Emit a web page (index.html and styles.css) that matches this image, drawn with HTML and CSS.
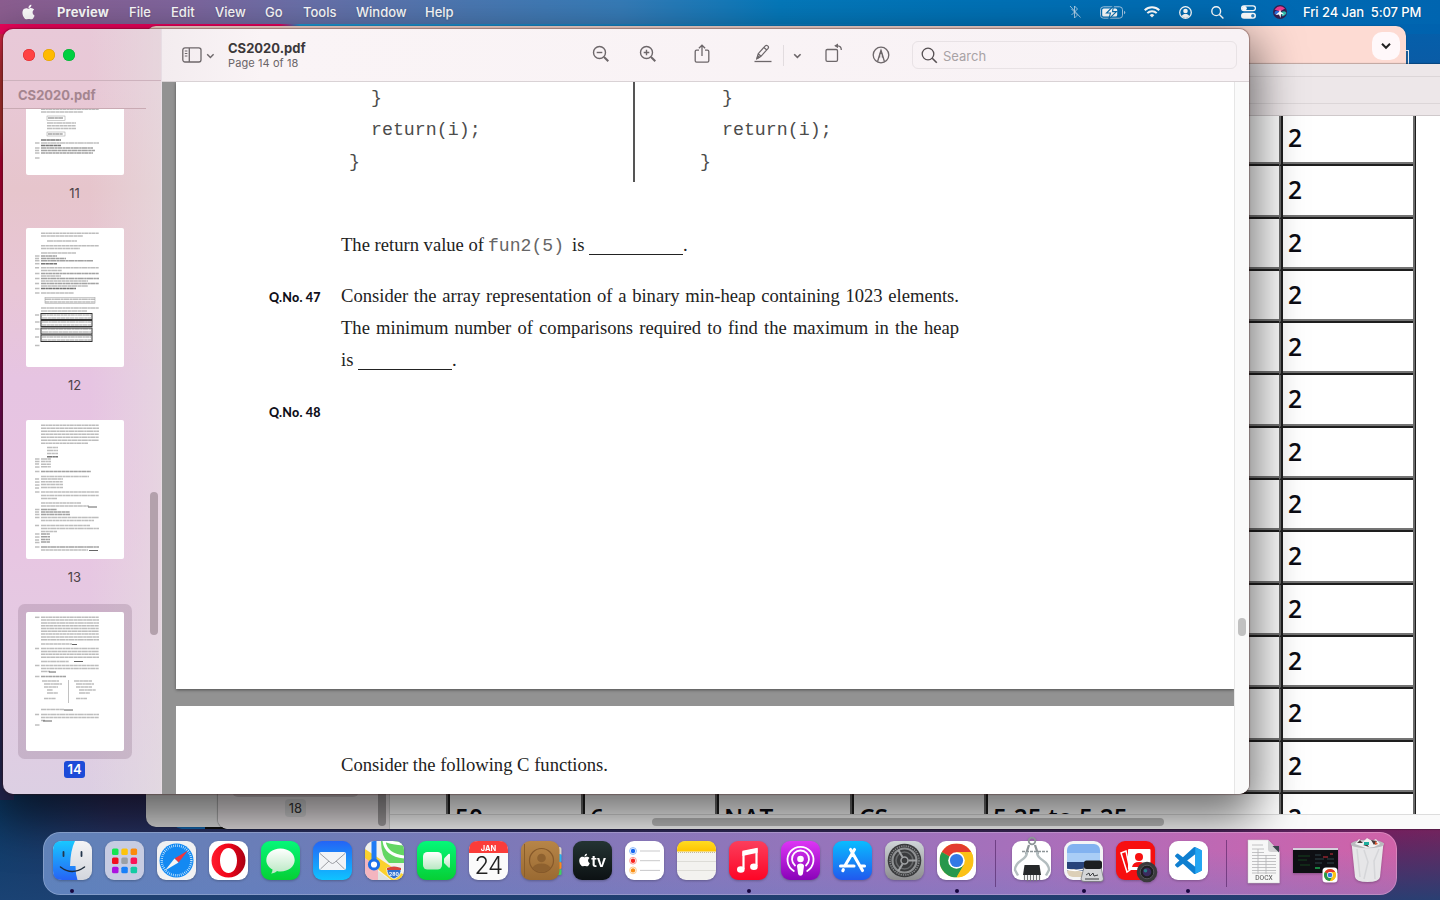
FILE: index.html
```html
<!DOCTYPE html>
<html lang="en">
<head>
<meta charset="utf-8">
<title>CS2020.pdf</title>
<link rel="stylesheet" href="styles.css">
</head>
<body>
<svg class="defs" width="0" height="0">
  <defs>
    <linearGradient id="gBlue" x1="0" y1="0" x2="0" y2="1"><stop offset="0" stop-color="#18c8ff"/><stop offset="1" stop-color="#2663f6"/></linearGradient>
    <linearGradient id="gGrey" x1="0" y1="0" x2="0" y2="1"><stop offset="0" stop-color="#f4f4f6"/><stop offset="1" stop-color="#d3d6dd"/></linearGradient>
    <linearGradient id="gGreen" x1="0" y1="0" x2="0" y2="1"><stop offset="0" stop-color="#05f779"/><stop offset="1" stop-color="#06cf35"/></linearGradient>
    <linearGradient id="gWhite" x1="0" y1="0" x2="0" y2="1"><stop offset="0" stop-color="#fff"/><stop offset="1" stop-color="#b9e8c3"/></linearGradient>
    <linearGradient id="gMail" x1="0" y1="0" x2="0" y2="1"><stop offset="0" stop-color="#2464f5"/><stop offset="1" stop-color="#0fc3ff"/></linearGradient>
    <linearGradient id="gOpera" x1="0" y1="0" x2="1" y2="0"><stop offset="0" stop-color="#ff1b2d"/><stop offset=".5" stop-color="#f00418"/><stop offset="1" stop-color="#a70014"/></linearGradient>
    <linearGradient id="gMusic" x1="0" y1="0" x2="0" y2="1"><stop offset="0" stop-color="#fb3e5c"/><stop offset="1" stop-color="#fd0526"/></linearGradient>
    <linearGradient id="gPod" x1="0" y1="0" x2="0" y2="1"><stop offset="0" stop-color="#dd35f5"/><stop offset="1" stop-color="#8903b8"/></linearGradient>
    <linearGradient id="gStore" x1="0" y1="0" x2="0" y2="1"><stop offset="0" stop-color="#09bcff"/><stop offset="1" stop-color="#2159ee"/></linearGradient>
    <linearGradient id="gGear" x1="0" y1="0" x2="0" y2="1"><stop offset="0" stop-color="#cfd5d8"/><stop offset="1" stop-color="#8d8d8f"/></linearGradient>
    <linearGradient id="gYellow" x1="0" y1="0" x2="0" y2="1"><stop offset="0" stop-color="#ffdb22"/><stop offset="1" stop-color="#ffc400"/></linearGradient>
    <linearGradient id="gBook" x1="0" y1="0" x2="0" y2="1"><stop offset="0" stop-color="#b78548"/><stop offset="1" stop-color="#9a6a32"/></linearGradient>
    <linearGradient id="gTv" x1="0" y1="0" x2="0" y2="1"><stop offset="0" stop-color="#243433"/><stop offset="1" stop-color="#0c1113"/></linearGradient>
    <symbol id="apple" viewBox="0 0 24 24"><path d="M12.152 6.896c-.948 0-2.415-1.078-3.96-1.04-2.04.027-3.91 1.183-4.961 3.014-2.117 3.675-.546 9.103 1.519 12.09 1.013 1.454 2.208 3.09 3.792 3.039 1.52-.065 2.09-.987 3.935-.987 1.831 0 2.35.987 3.96.948 1.637-.026 2.676-1.48 3.676-2.948 1.156-1.688 1.636-3.325 1.662-3.415-.039-.013-3.182-1.221-3.22-4.857-.026-3.04 2.48-4.494 2.597-4.559-1.429-2.09-3.623-2.324-4.39-2.376-2-.156-3.675 1.09-4.61 1.09zM15.53 3.83c.843-1.012 1.4-2.427 1.245-3.83-1.207.052-2.662.805-3.532 1.818-.78.896-1.454 2.338-1.273 3.714 1.338.104 2.715-.688 3.559-1.701"/></symbol>
    <symbol id="chrome" viewBox="0 0 34 34">
      <circle cx="17" cy="17" r="17" fill="#fbc116"/>
      <path d="M17 17L2.3 8.5A17 17 0 0 1 31.7 8.5H17z" fill="#e33b2e"/>
      <path d="M17 17L2.3 8.5A17 17 0 0 0 17 34L24.4 21.3z" fill="#27984c"/>
      <path d="M17 8.5H31.7A17 17 0 0 1 17 34L24.4 21.3z" fill="#fbc116"/>
      <circle cx="17" cy="17" r="8.3" fill="#fff"/><circle cx="17" cy="17" r="6.6" fill="#3279e6"/>
    </symbol>
  </defs>
</svg>

<header class="menubar">
  <svg class="menu-apple" viewBox="0 0 24 24"><use href="#apple" fill="#fff"/></svg>
  <nav class="menus">
    <span class="app">Preview</span><span>File</span><span>Edit</span><span>View</span><span>Go</span><span>Tools</span><span>Window</span><span>Help</span>
  </nav>
  <div class="status">
    <svg class="st-bt" width="12" height="14" viewBox="0 0 12 14" fill="none" stroke="#c3dcf0" stroke-width="1"><path d="M2.5 4l6 6-3 3V1l3 3-6 6M1 1l10.500 11.500" opacity=".8"/></svg>
    <svg class="st-bat" width="26" height="13" viewBox="0 0 26 13"><rect x=".5" y=".8" width="22" height="11.400" rx="3" fill="none" stroke="#a5c8e6"/><rect x="2.200" y="2.500" width="15" height="8" rx="1.500" fill="#fff"/><path d="M24 4.800v3.400q1.300-.4 1.300-1.700T24 4.800z" fill="#a5c8e6"/><path d="M13.500 0L6.500 7h4L8.800 13 16.500 5.600h-4z" fill="#fff" stroke="#0a6fb0" stroke-width="1.100"/></svg>
    <svg class="st-wifi" width="16" height="12" viewBox="0 0 16 12" fill="none" stroke="#fff" stroke-width="2"><path d="M.7 4.300a10.500 10.500 0 0 1 14.600 0M3.300 7.100a6.600 6.600 0 0 1 9.400 0"/><path d="M5.700 9.200a3.300 3.300 0 0 1 4.600 0L8 11.600z" fill="#fff" stroke="none"/></svg>
    <svg class="st-user" width="13" height="13" viewBox="0 0 13 13"><circle cx="6.500" cy="6.500" r="5.800" fill="none" stroke="#fff" stroke-width="1.300"/><circle cx="6.500" cy="5" r="2.300" fill="#fff"/><path d="M2.600 10.300C3.300 8.400 5 8 6.500 8s3.200.4 3.900 2.300Q8.700 12 6.500 12T2.600 10.300z" fill="#fff"/></svg>
    <svg class="st-search" width="13" height="13" viewBox="0 0 13 13" fill="none" stroke="#fff" stroke-width="1.400"><circle cx="5.200" cy="5.200" r="4.400"/><path d="M8.400 8.400l4 4"/></svg>
    <svg class="st-cc" width="15" height="14" viewBox="0 0 15 14"><rect x=".6" y=".9" width="13.800" height="4.800" rx="2.400" fill="none" stroke="#fff" stroke-width="1.200"/><circle cx="3.400" cy="3.300" r="2.400" fill="#fff"/><rect x="0" y="7.700" width="15" height="6" rx="3" fill="#fff"/><circle cx="11.800" cy="10.700" r="1.700" fill="#2b7fbd"/></svg>
    <svg class="st-siri" width="14" height="14" viewBox="0 0 14 14"><circle cx="7" cy="7" r="7" fill="#32204f"/><path d="M1.500 4.500q5-6 10.500-1L7 6.500z" fill="#e83a8c"/><path d="M1.500 9q0-5 5-2.500L4.500 10z" fill="#2b6bd9"/><path d="M8 7q4.500-2 5.500 1-2 4-4.500 3z" fill="#2bb8a9"/><path d="M7 4.500l1 2.500 3.500 2.500L8 9l-.5 4-1.500-3.500L2.500 10 6 7z" fill="#fff"/></svg>
    <span class="clock">Fri 24 Jan&nbsp; 5:07 PM</span>
  </div>
</header>

<div class="win win-under"></div>
<div class="win win-edge"></div>
<div class="win win-chrome"><span class="tab-menu"><svg width="10" height="6" viewBox="0 0 10 6" fill="none" stroke="#222" stroke-width="2"><path d="M1 .8l4 4 4-4"/></svg></span></div>

<section class="win win-back">
  <div class="back-toolbar"><div class="back-field"></div></div>
  <div class="back-body">
    <aside class="back-side"><div class="back-thumb"></div><span>18</span><i class="back-vscroll"></i></aside>
    <div class="back-doc">
      <div class="marks" id="marks"></div>
      <div class="hscroll"><i></i></div>
    </div>
  </div>
</section>

<main class="win win-main">
  <aside class="side">
    <div class="lights"><i class="red"></i><i class="amber"></i><i class="green"></i></div>
    <h2>CS2020.pdf</h2>
    <div class="side-body">
      <div class="thumbs">
        <figure class="cut"><svg class="thumb" data-page="11" viewBox="0 0 98 139"></svg><figcaption>11</figcaption></figure>
        <figure><svg class="thumb" data-page="12" viewBox="0 0 98 139"></svg><figcaption>12</figcaption></figure>
        <figure><svg class="thumb" data-page="13" viewBox="0 0 98 139"></svg><figcaption>13</figcaption></figure>
        <figure class="current"><svg class="thumb" data-page="14" viewBox="0 0 98 139"></svg><figcaption><b>14</b></figcaption></figure>
      </div>
      <i class="side-scroll"></i>
    </div>
  </aside>
  <div class="pane">
    <div class="toolbar">
      <svg class="t-side" width="20" height="16" viewBox="0 0 20 16" fill="none" stroke="#6d676a" stroke-width="1.300"><rect x=".8" y=".8" width="18.200" height="14.200" rx="2.200"/><path d="M7.300 1v14"/><path d="M2.800 4h2.600M2.800 6.500h2.600M2.800 9h2.600" stroke-width="1"/></svg>
      <svg class="t-chev1" width="9" height="6" viewBox="0 0 9 6" fill="none" stroke="#6d676a" stroke-width="1.400"><path d="M1.200 1.200l3.200 3.200 3.200-3.200"/></svg>
      <div class="title"><strong>CS2020.pdf</strong><span>Page 14 of 18</span></div>
      <svg class="t-zout" width="18" height="18" viewBox="0 0 18 18" fill="none" stroke="#6d676a" stroke-width="1.400"><circle cx="7.500" cy="7.500" r="6"/><path d="M4.700 7.500h5.600"/><path d="M12 12l4.300 4.300" stroke-width="2"/></svg>
      <svg class="t-zin" width="18" height="18" viewBox="0 0 18 18" fill="none" stroke="#6d676a" stroke-width="1.400"><circle cx="7.500" cy="7.500" r="6"/><path d="M4.700 7.500h5.600M7.500 4.700v5.600"/><path d="M12 12l4.300 4.300" stroke-width="2"/></svg>
      <svg class="t-share" width="16" height="20" viewBox="0 0 16 20" fill="none" stroke="#6d676a" stroke-width="1.300"><path d="M5 6.200H2.600Q1.200 6.200 1.200 7.600v9.200q0 1.400 1.400 1.400h10.800q1.400 0 1.400-1.400V7.600q0-1.400-1.400-1.400H11M8 12V1.200M4.900 4.200L8 1.200l3.100 3"/></svg>
      <svg class="t-pen" width="18" height="19" viewBox="0 0 18 19" fill="none" stroke="#6d676a" stroke-width="1.200"><path d="M3 14.500l1.200-4.800L11.300 1.800q1-1 2.400.1t.4 2.400L7 12.300z M9.900 3.500l2.900 2.500M4.200 9.700l2.800 2.600"/><path d="M3 14.500l.7-2.700 1.700 1.500z" fill="#6d676a"/><path d="M.5 17.500h17" stroke-width="1.300"/></svg>
      <i class="t-sep"></i>
      <svg class="t-chev2" width="9" height="6" viewBox="0 0 9 6" fill="none" stroke="#6d676a" stroke-width="1.600"><path d="M1.200 1.200l3.200 3.200 3.200-3.200"/></svg>
      <svg class="t-rot" width="18" height="20" viewBox="0 0 18 20" fill="none" stroke="#6d676a" stroke-width="1.300"><rect x="1" y="6.500" width="11.500" height="11.800" rx="1.300"/><path d="M10.500 2.800h2.300q3.500.2 3.500 4.200"/><path d="M9.200 2.800L13 .4v4.800z" fill="#6d676a" stroke="none"/></svg>
      <svg class="t-mark" width="18" height="18" viewBox="0 0 18 18" fill="none" stroke="#6d676a" stroke-width="1.300"><circle cx="9" cy="9" r="7.800"/><path d="M5.600 15.500L8.200 6.800 9 4.300l.8 2.500 2.600 8.700"/><path d="M6.800 11.500h1.400V8h1.600v3.500h1.400L9.800 6 9 3.900 8.200 6z" fill="#6d676a" stroke="none"/></svg>
      <div class="search"><svg width="17" height="17" viewBox="0 0 17 17" fill="none" stroke="#554f52" stroke-width="1.300"><circle cx="7" cy="7" r="5.800"/><path d="M11.200 11.200l4.600 4.600" stroke-width="1.600"/></svg><span>Search</span></div>
    </div>
    <div class="viewer">
      <div class="pages">
        <article class="page first">
          <div class="code-pair">
            <pre class="code">  }
  return(i);
}</pre>
            <pre class="code second">  }
  return(i);
}</pre>
          </div>
          <p class="answer"><span class="w-ret">The return value of</span><code>fun2(5)</code><span class="w-is">is</span><u></u>.</p>
          <div class="question q47"><h3>Q.No. 47</h3><div>
            <p class="just">Consider the array representation of a binary min-heap containing 1023 elements.</p>
            <p class="just">The minimum number of comparisons required to find the maximum in the heap</p>
            <p class="blank"><span class="w-is2">is</span><u></u>.</p></div></div>
          <div class="question q48"><h3>Q.No. 48</h3></div>
        </article>
        <article class="page next"><p class="just short">Consider the following C functions.</p></article>
      </div>
      <div class="vscroll"><i></i></div>
    </div>
  </div>
</main>

<footer class="dock">
  <div class="cell on"><svg viewBox="0 0 39 39"><rect width="39" height="39" rx="9" fill="url(#gGrey)"/><path d="M22 0H9Q0 0 0 9v21q0 9 9 9h15.500q-2-6-2-14H17Q17.500 9 22 0z" fill="url(#gBlue)"/><path d="M10.500 11v4M28.500 11v4" stroke="#23364c" stroke-width="1.800" stroke-linecap="round"/><path d="M7.500 26q11.500 9 24 0" fill="none" stroke="#1d2b3b" stroke-width="1.500" stroke-linecap="round"/></svg></div>
  <div class="cell"><svg viewBox="0 0 39 39"><rect width="39" height="39" rx="9" fill="#c7cce2"/><g><rect x="7" y="7.500" width="6.500" height="6.500" rx="1.500" fill="#12e650"/><rect x="16.300" y="7.500" width="6.500" height="6.500" rx="1.500" fill="#fdc309"/><rect x="25.600" y="7.500" width="6.500" height="6.500" rx="1.500" fill="#fb8a0c"/><rect x="7" y="16.600" width="6.500" height="6.500" rx="1.500" fill="#f10f1e"/><rect x="16.300" y="16.600" width="6.500" height="6.500" rx="1.500" fill="#9aa0a6"/><rect x="25.600" y="16.600" width="6.500" height="6.500" rx="1.500" fill="#fb1458"/><rect x="7" y="25.800" width="6.500" height="6.500" rx="1.500" fill="#ab12e0"/><rect x="16.300" y="25.800" width="6.500" height="6.500" rx="1.500" fill="#1a80f8"/><rect x="25.600" y="25.800" width="6.500" height="6.500" rx="1.500" fill="#13cba3"/></g></svg></div>
  <div class="cell"><svg viewBox="0 0 39 39"><rect width="39" height="39" rx="9" fill="#f1f1f2"/><circle cx="19.500" cy="19.500" r="17" fill="#1389f2"/><circle cx="19.500" cy="19.500" r="14.800" fill="none" stroke="#d6efff" stroke-width="2.400" stroke-dasharray=".7 1.300"/><path d="M31 9.500L21.500 21.500 17.500 17.500z" fill="#f2343c"/><path d="M8 29.500L17.500 17.500l4 4z" fill="#f4f4f4"/></svg></div>
  <div class="cell"><svg viewBox="0 0 39 39"><rect width="39" height="39" rx="9" fill="#fff"/><path fill-rule="evenodd" d="M19.500 2.500a17 17 0 1 0 0 34a17 17 0 1 0 0-34zM19.500 7c5 0 8.500 5.500 8.500 12.500S24.500 32 19.500 32 11 26.500 11 19.500 14.500 7 19.500 7z" fill="url(#gOpera)"/></svg></div>
  <div class="cell"><svg viewBox="0 0 39 39"><rect width="39" height="39" rx="9" fill="url(#gGreen)"/><path d="M19.500 7.500C11.500 7.500 5.300 12.500 5.300 19c0 4 2.500 7.500 6.200 9.500 0 1.500-.5 3-1.500 4 2.500 0 4.700-1.200 6-2.500q1.700.5 3.500.5c8 0 14.200-5 14.200-11.500S27.500 7.500 19.500 7.500z" fill="url(#gWhite)"/></svg></div>
  <div class="cell"><svg viewBox="0 0 39 39"><rect width="39" height="39" rx="9" fill="url(#gMail)"/><rect x="6" y="11" width="27" height="18" rx="2" fill="#f1f3f6"/><path d="M7 12.500l10.800 9.300q1.700 1.400 3.400 0L32 12.500M7.500 28l8.500-8M31.500 28L23 20" fill="none" stroke="#9b9da3" stroke-width="1"/></svg></div>
  <div class="cell"><svg viewBox="0 0 39 39"><clipPath id="cpMap"><rect width="39" height="39" rx="9"/></clipPath><g clip-path="url(#cpMap)"><rect width="39" height="39" fill="#f2f1ec"/><path d="M16 0h23v22H24Q16 16 16 0z" fill="#63d663"/><path d="M39 3Q27 2 22 0l-3 0q2 14 20 16" fill="none" stroke="#fff" stroke-width="3"/><path d="M0 8l39 26v8H30L0 18z" fill="#fbd12d"/><path d="M0 17l13 9v13H0z" fill="#f4b5bf"/><path d="M13 30l12 9H13z" fill="#dfe3e0"/><path d="M6.500 0h5v20h-5z" fill="#1f7bf4"/></g><circle cx="9" cy="23.500" r="4.600" fill="#fff" stroke="#1b6fe9" stroke-width="3"/><path d="M22 27q7-3 14 0 1 8-7 11-8-3-7-11z" fill="#2d6fd0" stroke="#fff" stroke-width=".8"/><path d="M22 27q7-3 14 0v2H22z" fill="#d9433d"/><text x="29" y="34.500" class="tiny280">280</text></svg></div>
  <div class="cell"><svg viewBox="0 0 39 39"><rect width="39" height="39" rx="9" fill="url(#gGreen)"/><rect x="6" y="11" width="19" height="17.500" rx="4.500" fill="url(#gWhite)"/><path d="M27 17.500l4.500-4.500q1.500-.8 1.500.8v12q0 1.500-1.500.8L27 22z" fill="url(#gWhite)"/></svg></div>
  <div class="cell"><svg viewBox="0 0 39 39"><rect width="39" height="39" rx="9" fill="#fbfbfb"/><path d="M0 12V9Q0 0 9 0h21q9 0 9 9v3z" fill="#fb3c39"/><text x="19.500" y="9.500" class="cal-m">JAN</text><text x="19.500" y="33" class="cal-d">24</text></svg></div>
  <div class="cell"><svg viewBox="0 0 39 39"><rect x="33" y="6" width="7.500" height="9" rx="2" fill="#d9d2c8"/><rect x="33" y="13" width="7.500" height="8" rx="1.500" fill="#2bb4f0"/><rect x="33" y="21" width="7.500" height="7" rx="1.500" fill="#fb8b1e"/><rect x="33" y="28" width="7.500" height="6" rx="1.500" fill="#3ed160"/><rect width="38.500" height="39" rx="9" fill="url(#gBook)"/><path d="M3.500 3v33" stroke="#8a5e2b" stroke-width="1"/><circle cx="20.500" cy="19.500" r="12" fill="none" stroke="#86592a" stroke-width="1.200"/><circle cx="20.500" cy="17" r="4.300" fill="#8e612f"/><path d="M11.500 27q2-4.500 9-4.500t9 4.500q-4 4-9 4t-9-4z" fill="#8e612f"/></svg></div>
  <div class="cell"><svg viewBox="0 0 39 39"><rect width="39" height="39" rx="9" fill="url(#gTv)"/><use href="#apple" x="5" y="12.500" width="13" height="13" fill="#fff"/><text x="25.500" y="26" class="tv">tv</text></svg></div>
  <div class="cell"><svg viewBox="0 0 39 39"><rect width="39" height="39" rx="9" fill="#fff"/><path d="M15 10h20M15 19.700h20M15 29.400h20" stroke="#c9c9cb" stroke-width="1"/><g stroke-width="1"><circle cx="8" cy="10" r="3.400" fill="none" stroke="#8ab7f9"/><circle cx="8" cy="10" r="2.200" fill="#1767f1"/><circle cx="8" cy="19.700" r="3.400" fill="none" stroke="#fb9a95"/><circle cx="8" cy="19.700" r="2.200" fill="#f8241e"/><circle cx="8" cy="29.400" r="3.400" fill="none" stroke="#fccb8f"/><circle cx="8" cy="29.400" r="2.200" fill="#fa8e13"/></g></svg></div>
  <div class="cell"><svg viewBox="0 0 39 39"><rect width="39" height="39" rx="9" fill="#f3f2ef"/><path d="M0 10.500V9Q0 0 9 0h21q9 0 9 9v1.500z" fill="url(#gYellow)"/><path d="M0 20.500h39M0 29.500h39" stroke="#d7d5d0" stroke-width=".8"/><path d="M1 11.500h37" stroke="#b8aa80" stroke-width=".8" stroke-dasharray="1 1"/></svg></div>
  <div class="cell on"><svg viewBox="0 0 39 39"><rect width="39" height="39" rx="9" fill="url(#gMusic)"/><path d="M14.500 28V11.500L27.500 8.700V25" fill="none" stroke="#fff" stroke-width="2.200"/><path d="M13.400 9.800l15.200-3.100v5l-15.200 3.200z" fill="#fff"/><ellipse cx="11.800" cy="28.500" rx="3.800" ry="3.300" fill="#fff"/><ellipse cx="24.900" cy="25.700" rx="3.800" ry="3.300" fill="#fff"/></svg></div>
  <div class="cell"><svg viewBox="0 0 39 39"><rect width="39" height="39" rx="9" fill="url(#gPod)"/><g fill="none" stroke="#fff" stroke-width="1.800" stroke-linecap="round"><path d="M12.800 30A13 13 0 1 1 26.200 30"/><path d="M14 24.500a8.500 8.500 0 1 1 11 0"/></g><circle cx="19.500" cy="18" r="3.300" fill="#fff"/><path d="M16 25q0-2.500 3.500-2.500T23 25l-1.100 8q-.5 1.700-2.400 1.700T17.100 33z" fill="#fff"/></svg></div>
  <div class="cell"><svg viewBox="0 0 39 39"><rect width="39" height="39" rx="9" fill="url(#gStore)"/><g fill="none" stroke="#fff" stroke-width="3.100" stroke-linecap="round"><path d="M21.500 8.500L11.800 25M17.500 8.500L29.500 29.500M7.500 25h13.500M27 25h4.500M10.300 28.700l-.5 1"/></g></svg></div>
  <div class="cell"><svg viewBox="0 0 39 39"><rect width="39" height="39" rx="9" fill="url(#gGear)"/><circle cx="19.500" cy="19.500" r="16.800" fill="#3a3b3d"/><circle cx="19.500" cy="19.500" r="14.500" fill="none" stroke="#85878a" stroke-width="1.600" stroke-dasharray="1.300 1"/><circle cx="19.500" cy="19.500" r="12" fill="none" stroke="#8e9092" stroke-width="2.200"/><circle cx="19.500" cy="19.500" r="8.500" fill="none" stroke="#66686a" stroke-width="1.600"/><circle cx="19.500" cy="19.500" r="3.500" fill="#3a3b3d" stroke="#a0a2a4" stroke-width="1.500"/><path d="M23.500 19.500H32M17.500 16L13.200 8.700M17.500 23L13.200 30.300" stroke="#a0a2a4" stroke-width="2"/></svg></div>
  <div class="cell on"><svg viewBox="0 0 39 39"><rect width="39" height="39" rx="9" fill="#fff"/><use href="#chrome" x="2.500" y="2.500" width="34" height="34"/></svg></div>
  <i class="rule"></i>
  <div class="cell"><svg viewBox="0 0 39 39"><rect width="39" height="39" rx="9" fill="#fff"/><g fill="none" stroke="#8d9598"><circle cx="20" cy="0" r="3.300" stroke-width="1.800"/><path d="M17 4l-3 9M23 4l3 9" stroke-width="2.300"/><path d="M10 10.500h26" stroke-width="1.400" stroke-dasharray="3 1"/><path d="M15 11Q15 16 9 19.500 3 23.500 3 29l3 5.500M25 11q0 5 6 8.500 6 4 6 9.500l-3 5.500" stroke="#b3bdbf" stroke-width="2.400"/></g><path d="M12.500 24h15l1.500 10H11z" fill="#26282a"/><path d="M12.500 34v5M15.500 34v6M18.500 34v6M21.500 34v6M24.500 34v6M27.500 34v5" stroke="#77797a" stroke-width="1.200"/></svg></div>
  <div class="cell on"><svg viewBox="0 0 39 39"><rect width="39" height="39" rx="9" fill="#f4f4f6"/><clipPath id="cpPrev"><rect x="3" y="3" width="33" height="33" rx="6"/></clipPath><g clip-path="url(#cpPrev)"><rect width="39" height="22" fill="#82b2f0"/><rect y="12" width="39" height="10" fill="#a9cdf6"/><rect y="21" width="39" height="9" fill="#27437a"/><path d="M0 30l10-2 8 3 21-1v10H0z" fill="#dccfb7"/><path d="M3 28.500l8 1 8-1" stroke="#fff" stroke-width="1.500" fill="none"/></g><path d="M20 26h17l2.500 12q-.3 2.500-3 2.500H20q-2.800 0-3-2.500z" fill="#d4d6d8" stroke="#6d7073" stroke-width=".7"/><rect x="20" y="19.500" width="18" height="8.500" rx="2.500" fill="#1c1e20"/><path d="M22 34l3-2 1 3 3-3 1 3 4-1M21 38h14" stroke="#3d4043" stroke-width="1" fill="none"/></svg></div>
  <div class="cell"><svg viewBox="0 0 39 39"><rect width="39" height="39" rx="9" fill="#f70f10"/><path d="M5 12l5-2 4 19-3 2z" fill="none" stroke="#fff" stroke-width="1.500"/><rect x="12" y="8" width="22.500" height="21" rx="1" fill="#fff"/><circle cx="23" cy="16" r="4" fill="#f70f10"/><path d="M16 26q1-5 7-5t7 5z" fill="#f70f10"/><circle cx="31" cy="31" r="10.300" fill="#3a3a3c"/><circle cx="31" cy="31" r="6.800" fill="#1f1f22" stroke="#55565a"/><circle cx="31" cy="31" r="4.300" fill="#3b2a5d"/><circle cx="29.500" cy="29.700" r="1.800" fill="#277e87"/></svg></div>
  <div class="cell on"><svg viewBox="0 0 39 39"><rect width="39" height="39" rx="9" fill="#fff"/><svg x="6" y="6" width="27" height="27" viewBox="0 0 24 24"><path fill="#0f7fd0" d="M23.150 2.587L18.210.21a1.494 1.494 0 0 0-1.705.29l-9.460 8.630-4.120-3.128a.999.999 0 0 0-1.276.057L.327 7.261A1 1 0 0 0 .326 8.740L3.899 12 .326 15.260a1 1 0 0 0 .001 1.479L1.650 17.940a.999.999 0 0 0 1.276.057l4.120-3.128 9.460 8.630a1.492 1.492 0 0 0 1.704.29l4.942-2.377A1.500 1.500 0 0 0 24 20.060V3.939a1.500 1.500 0 0 0-.85-1.352zm-5.146 14.861L10.826 12l7.178-5.448v10.896z"/><path fill="#23a5f2" d="M18 .3l5.150 2.287A1.500 1.500 0 0 1 24 3.939V20.060a1.500 1.500 0 0 1-.85 1.352L18 23.700z"/></svg></svg></div>
  <i class="rule"></i>
  <div class="cell"><svg viewBox="0 0 39 39"><path d="M4-1h20l11.500 12V42H4z" fill="#f7f7f7" stroke="#ccc" stroke-width=".5"/><path d="M24-1v9q0 3 3 3h8.500z" fill="#d2d2d4"/><path d="M28.500 5l6.500 6.500V5z" fill="#38424c"/><g stroke="#b4b4b6" stroke-width=".8"><path d="M8 4h11M8 8h12M8 11.500h12M8 14.500h24M8 17.500h24M8 20.500h24M8 23.500h24M8 26.500h24M8 29.500h24M8 32h24M14 8v25M22 14v19"/></g><text x="20" y="39" class="docx">DOCX</text></svg></div>
  <div class="cell"><svg viewBox="0 0 39 39"><rect x="-3" y="7" width="45" height="25" fill="#0e0f13"/><path d="M-3 7h45v2H-3z" fill="#d6d0dc"/><path d="M2 15h12M2 19h9M4 24h10" stroke="#14421f" stroke-width="1"/><path d="M19 14h6M19 18h9M19 22h7M31 18h7M31 22h7" stroke="#31444a" stroke-width="1"/><path d="M27 16h5M34 13h3" stroke="#d32f3d" stroke-width="1"/><path d="M19 27h5" stroke="#21c45b" stroke-width="1.300"/><rect x="26.500" y="26.500" width="15" height="15" rx="3.500" fill="#fff"/><use href="#chrome" x="28" y="28" width="12" height="12"/></svg></div>
  <div class="cell"><svg viewBox="0 0 39 39"><path d="M3.500 2h32L32 36q-.8 5-12.500 5T7 36z" fill="#e6e6e8"/><path d="M9 8l3 28M16 9l4 12-4 17M31 8l-5 12 1 18" stroke="#d5d6d9" stroke-width="1.500" fill="none"/><ellipse cx="19.500" cy="3" rx="16.500" ry="4.300" fill="#b9bbbe"/><path d="M7 3l4-5 4 3 4-4 5 3 4-2 4 5-6 3-8 1z" fill="#f1f1f1"/><path d="M9 2l3-3 3 3zM23-1l3 5 3-4zM15 4l4-1 2 3z" fill="#47393a"/><path d="M16 1h5v3h-5z" fill="#1cae9c"/><path d="M27 0l3 3-3 1z" fill="#d95b34"/></svg></div>
</footer>
<script src="main.js"></script>
</body>
</html>
```

FILE: styles.css
```css
* { box-sizing: border-box; }
html { overflow: hidden; }
body {
  margin: 0; width: 1440px; height: 900px; overflow: hidden; position: relative;
  font-family: Inter, Roboto, "Liberation Sans", sans-serif; font-size: 13px; color: #333;
  background:
    linear-gradient(90deg, #f2055d 0, #f0005f 280px, #1d9cd8 300px, #1b86c6 600px, #0072b8 1000px, #0062ae 1440px) 0 0 / 100% 34px no-repeat,
    linear-gradient(180deg, #0062ae 0, #0b5ba5 70px) 1100px 0 / 340px 80px no-repeat,
    linear-gradient(180deg, #e0174f 0, #cc3a38 80px, #cf3a38 125px, #d8003d 160px, #c50042 270px, #8c0a62 400px, #4a2262 520px, #2b2f62 640px, #2a2c5e 800px) 0 0 / 14px 800px no-repeat,
    linear-gradient(180deg, transparent 780px, rgba(28,68,118,.9) 900px),
    linear-gradient(90deg, #08355f 0, #2b2552 110px, #341c4e 500px, #44163f 900px, #5c0f46 1200px, #a80a50 1390px, #a5104f 1440px);
}
.defs { position: absolute; }
p, h2, h3, pre, figure { margin: 0; }
svg { display: block; overflow: visible; flex: none; }
i { display: block; font-style: normal; }

/* menu bar */
.menubar {
  height: 24px; display: flex; align-items: center; color: #fff; padding-left: 21px; font-weight: 500;
  background: linear-gradient(90deg, #8c5e90 0, #7f659d 180px, #6a70a9 300px, #4a78b2 470px, #367cb8 620px, #0579bb 780px, #0072b7 1000px, #0065b0 1440px);
  text-shadow: 0 1px 2px rgba(0,0,0,.2);
}
.menu-apple { width: 15px; height: 16px; }
.menus { display: grid; grid-template-columns: 72px 42px 44px 50px 38px 53px 69px 40px; margin-left: 21px; }
.menus .app { font-weight: 700; letter-spacing: .15px; }
.status { margin-left: auto; padding-right: 19px; display: flex; align-items: center; }
.st-bt { margin-right: 1px; }
.st-bat { margin-left: 18px; } .st-wifi { margin-left: 18px; } .st-user { margin-left: 19px; }
.st-search { margin-left: 19px; } .st-cc { margin-left: 17px; } .st-siri { margin-left: 17px; }
.clock { margin-left: 16px; width: 118px; white-space: nowrap; letter-spacing: -.08px; padding-bottom: 1px; }

/* desktop windows */
.win { position: absolute; }
.win-under { left: 172px; top: 800px; width: 66px; height: 29px; background: linear-gradient(90deg, #1466ad 50%, #111 50%); border-radius: 0 0 0 10px; }
.win-edge { left: 1300px; top: 50px; width: 109px; height: 40px; background: #1f5e98; border: 1px solid #e4e9ee; }
.win-chrome { left: 146px; top: 26px; width: 1260px; height: 801px; border-radius: 10px; background: linear-gradient(#fddbd3 0, #fddbd3 70px, #dcdcdc 90px); box-shadow: 0 0 1px rgba(0,0,0,.6); }
.tab-menu { position: absolute; right: 6px; top: 6px; width: 28px; height: 28px; border-radius: 10px; background: #fff8fa; display: grid; place-items: center; }

.win-back { left: 218px; top: 64px; width: 1222px; height: 765px; border-radius: 10px 0 0 10px; overflow: hidden; background: #fff; box-shadow: 0 0 1px 1px rgba(0,0,0,.25); }
.back-toolbar { height: 52px; background: #ede7e9; border-bottom: 1px solid #cfc9cb; padding: 12px 0; }
.back-field { height: 28px; border: 1px solid #dcd6d8; border-width: 1px 0; }
.back-body { display: flex; height: 713px; }
.back-side { width: 172px; background: #e4dfe1; border-right: 1px solid #ccc; position: relative; display: flex; flex-direction: column; justify-content: flex-end; align-items: center; padding: 0 16px 12px 0; }
.back-side span { font-size: 13px; line-height: 16px; padding: 1px 4px; border-radius: 4px; background: #cfcfd0; }
.back-thumb { width: 127px; height: 100px; border-radius: 6px; background: #c3bcbf; margin-bottom: 2px; }
.back-vscroll { position: absolute; right: 3px; bottom: 3px; width: 8px; height: 200px; border-radius: 4px; background: #9d999b; }
.back-doc { flex: 1; display: flex; flex-direction: column; min-width: 0; }
.marks { height: 698px; overflow: hidden; padding-left: 56px; font: 600 24.5px/48px "Open Sans", "Noto Sans", sans-serif; color: #0b0b12; }
.row { display: grid; grid-template-columns: 135px 134px 135px 134px 295px 134px 3px; height: 52.31px; }
.row:first-child { margin-top: -2px; }
.row span { border-left: 2px solid #6a6a6a; box-shadow: inset 2px 0 #1e1e1e, inset 0 -2px #747474; padding-left: 7px; border-bottom: 2px solid #1e1e1e; height: 52.31px; white-space: nowrap; }
.row span:last-child { padding: 0; border-bottom: 0; box-shadow: inset 2px 0 #1e1e1e; }
.hscroll { height: 15px; background: #fafafa; border-top: 1px solid #ddd; padding: 3px 0 0 262px; }
.hscroll i { width: 512px; height: 8px; border-radius: 4px; background: #bcbcbc; }

/* front window */
.win-main { left: 3px; top: 29px; width: 1246px; height: 765px; display: flex; border-radius: 10px; box-shadow: 0 0 1px 1px rgba(60,20,20,.35), 0 18px 46px 8px rgba(0,0,0,.55); }
.side {
  width: 159px; border-radius: 10px 0 0 10px; overflow: hidden; border-right: 1px solid #e7dde4;
  background: linear-gradient(90deg, transparent 55%, rgba(230,222,224,.6)), linear-gradient(180deg, #e8c9d8 0, #e8c8d6 60px, #e6c5cc 160px, #e8c6d6 260px, #e6c4e2 350px, #e8c5e2 500px, #e3cbe2 640px, #dccfe3 766px);
  display: flex; flex-direction: column;
}
.lights { display: flex; gap: 8px; padding: 20px 0 0 20px; height: 52px; border-bottom: 1px solid #cdb2bd; }
.lights i { width: 12px; height: 12px; border-radius: 50%; }
.red { background: #ff4244; box-shadow: inset 0 0 0 .5px #d9242a; } .amber { background: #ffba00; box-shadow: inset 0 0 0 .5px #d99a00; } .green { background: #00cf40; box-shadow: inset 0 0 0 .5px #05a834; }
.side h2 { font-size: 13px; line-height: 28px; height: 28px; padding-left: 15px; color: #a4858f; font-weight: 700; width: 143px; border-bottom: 1px solid #c9aab3; flex: none; }
.side-body { display: flex; flex: 1; min-height: 0; position: relative; overflow: hidden; }
.thumbs { width: 144px; margin-top: -73px; flex: none; }
.thumbs figure { height: 192px; display: flex; flex-direction: column; align-items: center; }
.thumb { width: 98px; height: 139px; background: #fff; border-radius: 2px; }
.thumbs figcaption { font-size: 13px; line-height: 16px; margin-top: 10px; color: #4c4347; padding-right: 1px; }
.current .thumb { box-shadow: 0 0 0 8px rgba(150,120,145,.32); }
.current b { display: block; background: #1c4bd8; color: #fff; font-weight: 600; padding: 0 3px; border-radius: 3px; line-height: 17px; }
.side-scroll { width: 8px; height: 143px; border-radius: 4px; background: #b3a1ac; margin: 383px 0 0 3px; }
.pane { flex: 1; display: flex; flex-direction: column; min-width: 0; }
.toolbar { height: 53px; background: linear-gradient(90deg, #f3ecef, #faf4f6 100px, #f8f2f5); border-bottom: 1px solid #d9d2d5; border-radius: 0 10px 0 0; display: flex; align-items: center; padding-left: 20px; }
.t-side { margin-top: -1px; }
.t-chev1 { margin-left: 4px; margin-top: 2px; }
.title { margin-left: 13px; width: 364px; display: flex; flex-direction: column; padding-top: 1px; }
.title strong { font-size: 13px; line-height: 15px; color: #3c383a; }
.title span { font-size: 11px; line-height: 14px; color: #6b6568; letter-spacing: .1px; }
.t-zout, .t-zin { margin-top: -2px; }
.t-zin { margin-left: 29px; } .t-share { margin-left: 37px; margin-top: -2px; } .t-pen { margin-left: 44px; margin-top: -3px; }
.t-sep { width: 1px; height: 21px; background: #e2dcdf; margin-left: 11px; }
.t-chev2 { margin-left: 9px; margin-top: 2px; } .t-rot { margin-left: 23px; margin-top: -4px; } .t-mark { margin-left: 29px; margin-top: -1px; }
.search { margin-left: 22px; width: 325px; height: 28px; border: 1px solid #e8e2e5; border-radius: 6px; display: flex; align-items: center; gap: 5px; padding: 0 8px; font-size: 13px; color: #a8a2a5; }
.search span { padding-top: 2px; }
.viewer { flex: 1; display: flex; min-height: 0; overflow: hidden; border-radius: 0 0 10px 0; background: #fff; }
.pages { width: 1072px; background: #929292; padding-left: 14px; }
.page { background: #fff; font-family: "Liberation Serif", serif; font-size: 18.6px; line-height: 32px; color: #222; }
.first { height: 607px; margin-bottom: 17px; box-shadow: 0 1px 3px rgba(0,0,0,.45); overflow: hidden; }
.next { height: 90px; padding: 43px 0 0 165px; }
.code-pair { display: grid; grid-template-columns: 286px 240px; padding-left: 173px; margin-left: 0; }
.code { font: 18.3px/32px "Liberation Mono", monospace; color: #4c4c4c; height: 100px; }
.code:first-child { border-right: 2px solid #555; }
.code.second { padding-left: 65px; }
.answer { display: flex; padding: 47px 0 0 165px; align-items: baseline; }
.w-ret { width: 143px; white-space: nowrap; text-align-last: justify; }
.answer code { font: 18.1px "Liberation Mono", monospace; color: #666; margin-left: 4px; width: 78px; }
.w-is { margin-left: 6px; width: 13px; } .w-is2 { width: 13px; }
.page u { width: 94px; height: 1px; background: #222; text-decoration: none; position: relative; top: 4px; margin-left: 4px; }
.question { display: flex; padding-left: 93px; }
.question h3 { width: 72px; font: 900 12.500px/32px Lato, sans-serif; letter-spacing: .2px; color: #10101a; }
.q47 { margin-top: 19px; } .q47 h3 { padding-top: 2px; } .q48 { margin-top: 21px; }
.just { width: 618px; text-align-last: justify; white-space: nowrap; }
.short { width: 267px; }
.blank { display: flex; align-items: baseline; }
.vscroll { width: 15px; background: #fafafa; border-left: 1px solid #e6e6e6; padding: 536px 0 0 3px; }
.vscroll i { width: 8px; height: 18px; border-radius: 4px; background: #c1c1c1; }

/* dock */
.dock {
  position: absolute; left: 43px; top: 832px; width: 1354px; height: 63px; border-radius: 17px; padding: 9px 0 0 3px; display: flex;
  background: linear-gradient(180deg, transparent 30%, rgba(90,130,200,.3)), linear-gradient(90deg, #6082b8 0, #6b7db8 240px, #8078b8 500px, #9475bb 760px, #a96fbb 1000px, #c267b2 1200px, #d062a8 1354px);
  box-shadow: inset 0 0 0 1px rgba(255,255,255,.22);
}
.cell { width: 52.06px; flex: none; display: flex; flex-direction: column; align-items: center; }
.cell > svg { width: 39px; height: 39px; filter: drop-shadow(0 1px 1px rgba(0,0,0,.25)); }
.cell.on::after { content: ""; width: 4px; height: 4px; border-radius: 50%; background: #17063f; margin-top: 9px; }
.rule { width: 1px; height: 47px; margin: -1px 10px 0 12px; background: rgba(70,25,90,.55); flex: none; }
.tiny280 { font: 700 5px Inter, sans-serif; fill: #fff; text-anchor: middle; }
.cal-m { font: 700 7.500px Inter, sans-serif; fill: #fff; text-anchor: middle; }
.cal-d { font: 300 24px Inter, sans-serif; fill: #222; text-anchor: middle; letter-spacing: -.8px; }
.tv { font: 600 16px Inter, sans-serif; fill: #fff; text-anchor: middle; letter-spacing: -.5px; }
.docx { font: 500 6px Inter, sans-serif; fill: #555; text-anchor: middle; }
```

FILE: main.js
```js
// Marks table: the final row carries the full record, the others only show the marks column.
const marks = document.getElementById('marks');
for (let n = 0; n < 14; n++) {
  const cells = n === 13 ? ['50', '6', 'NAT', 'CS', '5.25 to 5.25', '2', ''] : ['', '', '', '', '', '2', ''];
  marks.insertAdjacentHTML('beforeend', '<div class="row">' + cells.map(c => `<span>${c}</span>`).join('') + '</div>');
}

// Page miniatures: each entry is [x1, x2, y, shade].
const span = (x1, x2, from, to, step) => {
  const out = [];
  for (let y = from; y <= to + 0.01; y += step) out.push([x1, x2, y]);
  return out;
};
const tags = (...ys) => ys.map(y => [9, 13.5, y]);
const miniatures = {
  11: { lines: [[15, 73, 73, 1], [15, 57, 76], ...span(21, 50, 87, 93, 2.8), [22, 37, 82, 1], [22, 37, 98, 1], [15, 35, 104, 2], [15, 73, 107], [15, 35, 109.500, 2], [15, 67, 112, 1], [15, 69, 114.500, 1], [15, 67, 117, 1], ...tags(107, 112, 114.500, 117, 122)], boxes: [[21, 80, 18, 4.500], [21, 96, 18, 4]] },
  12: { lines: [[15, 73, 5.300], [15, 57, 8], [21, 51, 13], [15, 73, 17.700], [15, 54, 20.500], [15, 50, 25], [15, 31, 28, 1], [15, 40, 30.500, 1], [15, 67, 32.700, 1], [15, 31, 35.700, 2], [15, 73, 39.700], [15, 36, 42.500], [15, 73, 45.500, 1], [15, 35, 48], [15, 73, 50.500, 1], [15, 62, 53], [15, 73, 55.500, 1], [15, 62, 58], [15, 50, 60.500, 2], [15, 48, 65], [19, 69, 71.300], [19, 69, 74], [15, 73, 80], [15, 61, 83], [16, 65, 87], [16, 65, 90], [16, 65, 94], [16, 65, 97], [16, 65, 101], [16, 65, 104], [16, 65, 109], [16, 65, 112], ...tags(28, 30.500, 32.700, 35.700, 39.700, 45.500, 50.500, 55.500, 60.500, 65, 87, 94, 101, 109, 117.500)], boxes: [[19, 69.500, 50, 6], [15, 85.500, 51, 6, 1], [15, 92.500, 51, 6, 1], [15, 100, 51, 6, 1], [15, 107, 51, 6.500, 1]] },
  13: { lines: [...span(15, 73, 5.300, 21, 3), [15, 62, 23.300], ...span(21, 32, 27.500, 33.500, 3), [21, 32, 36.700, 2], ...span(15, 25, 39, 47, 2.600), [15, 65, 51.500, 1], [15, 63, 56.500], ...span(15, 37, 59, 68, 2.800), [15, 73, 72], [15, 73, 75.500], [15, 31, 78.500], [15, 55, 83], [15, 63, 86], [15, 31, 89.500, 1], [15, 44, 92, 1], [15, 44, 94.500, 1], [15, 73, 97.500], [15, 68, 100.500], [15, 64, 105.500], [15, 73, 108.500], [15, 31, 111.500], ...span(15, 24, 114, 122.500, 2.700).map(l => [...l, 1]), [15, 73, 127, 1], [15, 62, 130], ...tags(39, 41.500, 44, 47, 51.500, 59, 62, 65, 68, 72, 89.500, 92, 94.500, 97.500, 105.500, 114, 117, 120, 122.500, 127)], rules: [[62, 71, 87], [63, 72, 130.500]] },
  14: { lines: [...span(15, 73, 5.300, 29, 2.800), [15, 46, 32], ...span(15, 73, 36.500, 48, 2.900), [15, 43, 49.500], [15, 73, 53.500], [15, 73, 56.500], [15, 24, 59.500], [15, 40, 64.500, 1], [16, 33, 69], [18, 36, 72], [18, 32, 75], [21, 27, 78], [21, 32, 81], [18, 30, 86.500], [48, 66, 69], [50, 68, 72], [50, 66, 75], [53, 70, 78], [53, 64, 81], [50, 61, 86.500], [15, 38, 97.500], [15, 73, 102.500], [15, 73, 105.500], [15, 19, 108.500], ...tags(5.300, 36.500, 53.500, 64.500, 102.500, 113)], rules: [[46, 51, 32.500], [48, 57, 49.500], [23, 30, 60], [38, 47, 98], [17, 26, 109]], bar: true },
};
const shades = ['#a8a8a8', '#858585', '#4c4c4c'];
document.querySelectorAll('.thumb').forEach(svg => {
  const m = miniatures[svg.dataset.page];
  let out = '';
  m.lines.forEach(([a, b, y, s = 0], i) => {
    out += `<path d="M${a} ${y}H${b}" stroke="${shades[s]}" stroke-width="1.500" opacity=".75" stroke-dasharray="${4 + (i % 3)} .4 ${2.500 + (i % 2)} .3"/>`;
  });
  (m.rules || []).forEach(([a, b, y]) => { out += `<path d="M${a} ${y}H${b}" stroke="#555" stroke-width=".9"/>`; });
  (m.boxes || []).forEach(([x, y, w, h, dark]) => {
    out += `<rect x="${x}" y="${y}" width="${w}" height="${h}" fill="none" stroke="${dark ? '#333' : '#999'}" stroke-width="${dark ? 1 : .5}"/>`;
  });
  if (m.bar) out += '<path d="M42.500 68v23" stroke="#999" stroke-width=".6"/>';
  svg.innerHTML = out;
});
```
